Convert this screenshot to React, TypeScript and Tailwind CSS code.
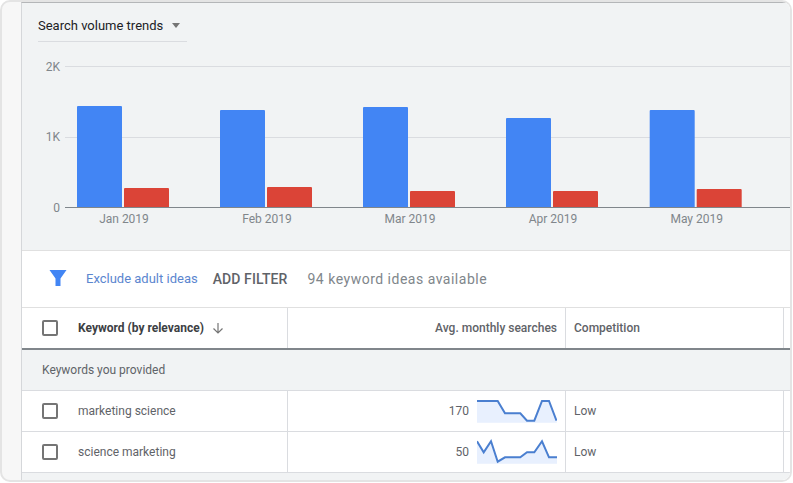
const BARS = [
  { label: "Jan 2019", x: 77, blue: 106, red: 188 },
  { label: "Feb 2019", x: 220, blue: 110, red: 187 },
  { label: "Mar 2019", x: 363, blue: 107, red: 191 },
  { label: "Apr 2019", x: 506, blue: 118, red: 191 },
  { label: "May 2019", x: 649.7, blue: 110, red: 189 },
];

const ORIGIN = 22;

function Chart() {
  return (
    <svg width={768} height={208} viewBox={`${ORIGIN} 42 768 208`} className="block shrink-0">
      <line x1={65} x2={790} y1={66.5} y2={66.5} stroke="#dadce0" />
      <line x1={65} x2={790} y1={137.5} y2={137.5} stroke="#dadce0" />
      {BARS.map((b) => (
        <g key={b.label}>
          <rect x={b.x} y={b.blue} width={45} height={208 - b.blue} rx={1} fill="#4285f4" />
          <rect x={b.x + 47} y={b.red} width={45} height={208 - b.red} rx={1} fill="#db4437" />
          <text x={b.x + 47} y={223} textAnchor="middle" fontSize={12} fill="#80868b">
            {b.label}
          </text>
        </g>
      ))}
      <line x1={65} x2={790} y1={207.5} y2={207.5} stroke="#80868b" />
      <text x={60} y={71} textAnchor="end" fontSize={12} fill="#80868b">2K</text>
      <text x={60} y={141} textAnchor="end" fontSize={12} fill="#80868b">1K</text>
      <text x={60} y={212} textAnchor="end" fontSize={12} fill="#80868b">0</text>
    </svg>
  );
}

function Box() {
  return <span className="block w-4 h-4 border-2 border-[#757575] rounded-[2px] shrink-0" />;
}

function Spark({ points, bottom }: { points: string; bottom: number }) {
  return (
    <svg width={80} height={26} viewBox="0 0 80 26" className="block shrink-0">
      <polygon points={`0,${bottom} ${points} 80,${bottom}`} fill="#e8f0fe" />
      <polyline points={points} fill="none" stroke="#4a7fd0" strokeWidth={2} />
    </svg>
  );
}

function Row({ name, value, points, bottom }: { name: string; value: string; points: string; bottom: number }) {
  return (
    <div className="flex h-[41px] shrink-0 border-b border-[#dadce0] text-xs text-[#5f6368]">
      <div className="w-[266px] shrink-0 flex items-center gap-5 pl-5 border-r border-[#dadce0]">
        <Box />
        <span>{name}</span>
      </div>
      <div className="w-[278px] shrink-0 flex items-center justify-end gap-2 pr-2 border-r border-[#dadce0]">
        <span>{value}</span>
        <Spark points={points} bottom={bottom} />
      </div>
      <div className="w-[218px] shrink-0 flex items-center pl-2 border-r border-[#dadce0]">Low</div>
    </div>
  );
}

export default function App() {
  return (
    <div
      className="w-[793px] h-[483px] overflow-hidden bg-white"
      style={{ fontFamily: "Roboto, sans-serif" }}
    >
      <div className="w-[792px] h-[482px] flex rounded-[10px] border-2 border-[#e4e4e4] overflow-hidden bg-[#f7f7f7]">
        <div className="w-[19px] shrink-0" />
        <div className="flex-1 min-w-0 flex flex-col border-l border-[#d5d7da] border-t border-t-[#b4b6b8] bg-white">
          <div className="bg-[#f1f3f4] h-[247px] shrink-0 flex flex-col">
            <div className="ml-4 mt-3 w-[149px] h-[27px] shrink-0 border-b border-[#dadce0] flex items-start gap-[9px] text-[13px] leading-5 text-[#202124]">
              <span className="mt-px">Search volume trends</span>
              <span className="mt-2 w-0 h-0 border-x-[4.5px] border-x-transparent border-t-[5px] border-t-[#757575]" />
            </div>
            <Chart />
          </div>
          <div className="h-[58px] shrink-0 flex items-center border-y border-[#e0e0e0]">
            <svg width={18} height={18} viewBox="0 0 18 18" className="ml-[27px] mb-0.5 shrink-0">
              <path d="M0.5 1H17.5L11.5 9.5V17H6.5V9.5z" fill="#4285f4" />
            </svg>
            <span className="ml-[19px] mb-px text-[13px] text-[#5b86cf]">Exclude adult ideas</span>
            <span className="ml-[15px] text-sm font-medium tracking-[0.1px] text-[#5f6368]">ADD FILTER</span>
            <span className="ml-5 text-sm tracking-[0.5px] text-[#80868b]">94 keyword ideas available</span>
          </div>
          <div className="h-[42px] shrink-0 flex border-b-2 border-[#80868b] text-xs font-medium text-[#5f6368]">
            <div className="w-[266px] shrink-0 flex items-center pl-5 border-r border-[#dadce0]">
              <Box />
              <span className="ml-5 text-[#3c4043] font-bold">Keyword (by relevance)</span>
              <svg width={12} height={12} viewBox="0 0 12 12" className="ml-2" fill="none" stroke="#757575" strokeWidth={1.2}>
                <path d="M6 1v10M1.5 6.5L6 11l4.5-4.5" />
              </svg>
            </div>
            <div className="w-[278px] shrink-0 flex items-center justify-end pr-2 border-r border-[#dadce0]">Avg. monthly searches</div>
            <div className="w-[218px] shrink-0 flex items-center pl-2 border-r border-[#dadce0]">Competition</div>
          </div>
          <div className="h-[41px] shrink-0 flex items-center pl-5 bg-[#f1f3f4] border-b border-[#dadce0] text-xs text-[#5f6368]">
            Keywords you provided
          </div>
          <Row
            name="marketing science"
            value="170"
            bottom={24.7}
            points="0,3 20.7,3 28,15.3 43.3,15.3 50,22.7 57.3,22.7 65,3 72,3 79.5,22.7"
          />
          <Row
            name="science marketing"
            value="50"
            bottom={24.7}
            points="0,2.3 6.7,13.3 14,2.3 20.7,22.7 28,18.3 43.3,18.3 50,13.3 57.3,13.3 65,2.3 72,18.3 80,18.3"
          />
          <div className="flex-1 bg-[#f1f3f4]" />
        </div>
      </div>
    </div>
  );
}
